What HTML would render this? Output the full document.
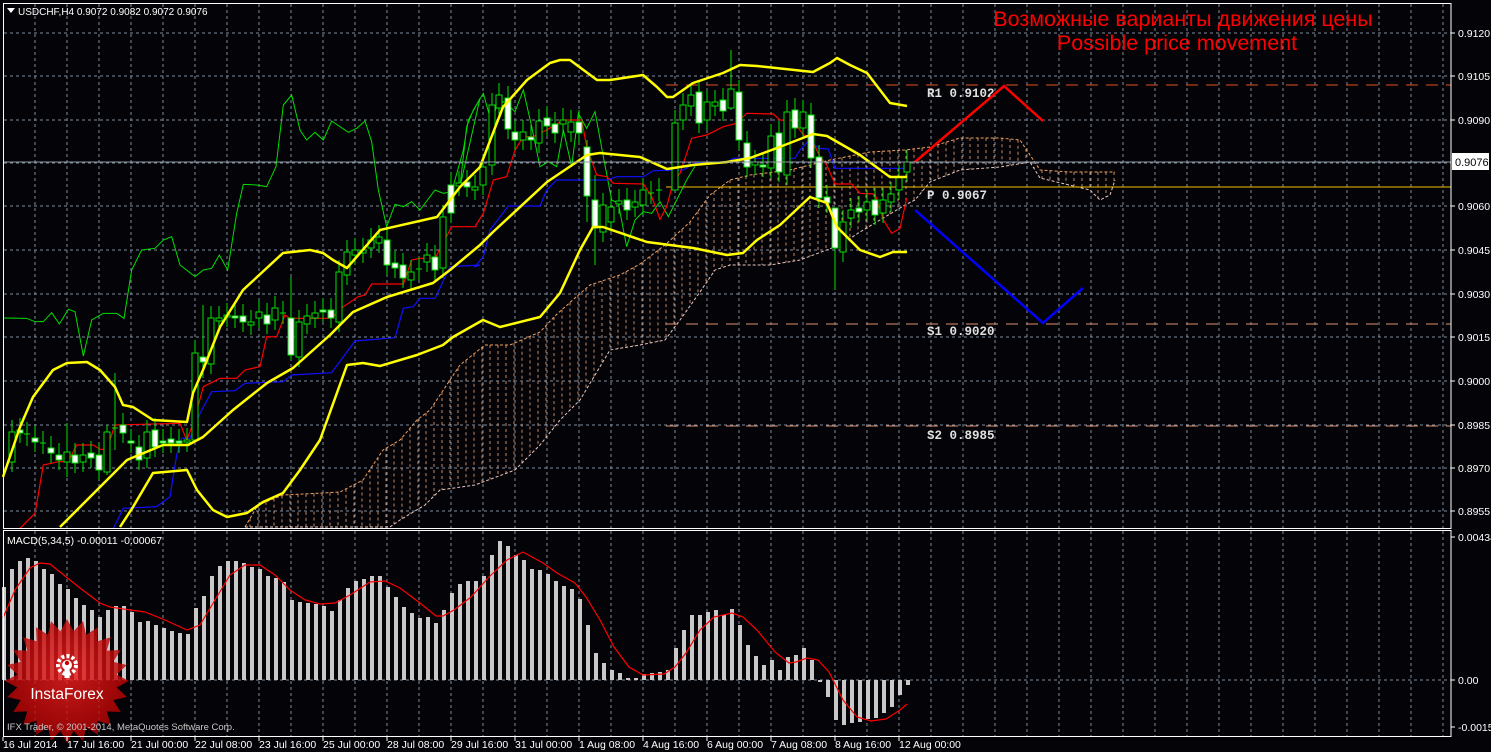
<!DOCTYPE html>
<html><head><meta charset="utf-8"><style>
html,body{margin:0;padding:0;background:#000;width:1491px;height:752px;overflow:hidden}
svg{display:block}
text{font-family:"Liberation Sans",sans-serif}
</style></head><body>
<svg id="s" width="1491" height="752" xmlns="http://www.w3.org/2000/svg"></svg>
<script>
const S=document.getElementById('s');let h='';
const P=a=>a.map(p=>p.join(',')).join(' ');
const pl=(pts,c,w,extra)=>{h+=`<polyline points="${P(pts)}" fill="none" stroke="${c}" stroke-width="${w}" ${extra||''}/>`};
h+=`<rect width="1491" height="752" fill="#040307"/>`;
for(let x=35;x<1451;x+=32){h+=`<line x1="${x}" y1="4" x2="${x}" y2="528" stroke="#7f8c9c" stroke-dasharray="3,3"/>`;h+=`<line x1="${x}" y1="531" x2="${x}" y2="736" stroke="#7f8c9c" stroke-dasharray="3,3"/>`;}
const levels=[[33,'0.9120'],[76,'0.9105'],[120,'0.9090'],[206,'0.9060'],[250,'0.9045'],[294,'0.9030'],[337,'0.9015'],[381,'0.9000'],[425,'0.8985'],[468,'0.8970'],[511,'0.8955']];
for(const [y,t] of levels){h+=`<line x1="4" y1="${y}" x2="1451" y2="${y}" stroke="#7f8c9c" stroke-dasharray="3,3"/>`;h+=`<line x1="1451" y1="${y}" x2="1455" y2="${y}" stroke="#fff"/><text x="1458" y="${y+4}" fill="#fff" font-size="10.5">${t}</text>`;}
h+=`<line x1="4" y1="163" x2="1451" y2="163" stroke="#7f8c9c" stroke-dasharray="3,3"/>`;
const cu=[[245,527],[258,505],[283,495],[323,493],[340,492],[363,480],[383,450],[400,440],[417,420],[430,410],[450,380],[460,365],[485,345],[510,345],[540,332],[556,315],[575,298],[590,285],[620,275],[640,264],[665,245],[690,222],[710,195],[730,180],[750,175],[790,170],[830,160],[870,152],[905,150],[930,147],[960,138],[1000,138],[1020,140],[1030,155],[1040,170],[1070,172],[1115,172]];
const cl=[[245,527],[390,527],[400,520],[425,505],[440,490],[475,485],[515,470],[540,445],[560,420],[580,400],[595,375],[610,350],[640,345],[665,340],[680,320],[700,292],[715,270],[730,265],[770,265],[800,260],[840,245],[860,232],[905,205],[915,200],[930,182],[960,170],[1000,167],[1030,162],[1040,178],[1090,190],[1100,200],[1110,195],[1115,180]];
function interp(a,x){for(let i=0;i<a.length-1;i++){if(x>=a[i][0]&&x<=a[i+1][0]){const t=(x-a[i][0])/(a[i+1][0]-a[i][0]||1);return a[i][1]+t*(a[i+1][1]-a[i][1]);}}return null}
for(let x=250;x<1115;x+=8){const a=interp(cu,x),b=interp(cl,x);if(a!=null&&b!=null&&Math.abs(b-a)>3)h+=`<line x1="${x}" y1="${a}" x2="${x}" y2="${b}" stroke="#e8a070" stroke-dasharray="3,3" stroke-width="1" opacity="0.85"/>`;}
pl(cu,'#f0a060',1,'stroke-dasharray="3,2"');pl(cl,'#e8c8c0',1,'stroke-dasharray="3,2"');
h+=`<line x1="666" y1="85" x2="1451" y2="85" stroke="#e05020" stroke-dasharray="12,8"/>`;
h+=`<line x1="666" y1="187" x2="1451" y2="187" stroke="#f0c000"/>`;
h+=`<line x1="666" y1="324" x2="1451" y2="324" stroke="#e09070" stroke-dasharray="12,8"/>`;
h+=`<line x1="666" y1="426" x2="1451" y2="426" stroke="#e09070" stroke-dasharray="12,8"/>`;
const lab=(x,y,t)=>{h+=`<text x="${x}" y="${y}" fill="#e0e0e0" font-size="12.5" font-weight="bold" style="font-family:'Liberation Mono',monospace">${t}</text>`};
lab(927,97,'R1 0.9102');lab(927,199,'P 0.9067');lab(927,335,'S1 0.9020');lab(927,439,'S2 0.8985');
const g1=[[0,835],[80,835],[105,845],[130,845],[155,818],[178,852],[205,808],[225,815],[250,948],[275,840],[310,820],[350,820],[372,835],[395,690],[425,630],[465,625],[490,600],[515,590],[540,675],[585,710],[610,690],[635,685],[658,645],[683,690],[710,520],[730,433],[770,435],[800,440],[828,380],[850,195],[875,165],[900,270],[920,300],[945,277],[970,300],[995,243],[1045,277],[1070,265],[1095,243],[1115,305],[1135,450],[1160,560],[1185,493],[1210,500],[1235,485],[1260,510],[1305,450],[1330,460],[1355,455],[1390,330],[1405,240],[1440,175]].map(p=>[p[0]/3,40+p[1]/3]);
const g2=[[0,440],[20,260],[40,210],[70,160],[95,250],[115,180],[140,190],[165,215],[190,150],[215,260],[240,380],[265,365],[290,380],[310,270],[335,380],[355,220],[380,265],[405,215],[430,350],[455,480],[475,490],[500,620],[525,540],[550,515],[575,520],[600,485],[625,530],[650,480],[680,420],[710,370]].map(p=>[460+p[0]/3,40+p[1]/3]);
pl([[4,318]].concat(g1.slice(1),g2),'#00e000',1);
const b1=[[340,1465],[370,1405],[470,1400],[510,1370],[530,1245],[545,1195],[570,1195],[600,1120],[635,1055],[705,1052],[735,1030],[850,1025],[875,1005],[995,998],[1065,903],[1185,893],[1210,805],[1240,800],[1260,775],[1305,775],[1350,680],[1440,675]].map(p=>[p[0]/3,40+p[1]/3]);
const b2=[[45,680],[70,650],[90,570],[145,498],[240,498],[260,450],[290,420],[440,420],[470,410],[550,410],[580,392],[670,390],[705,368],[800,368],[820,355],[1005,355],[1020,330],[1050,298],[1075,325],[1105,327],[1125,385],[1340,385]].map(p=>[460+p[0]/3,40+p[1]/3]);
pl(b1.concat(b2),'#1010ff',1.2);
const r1=[[60,1465],[105,1420],[130,1275],[175,1265],[205,1265],[230,1215],[280,1215],[300,1228],[320,1228],[345,1155],[540,1150],[560,1200],[580,1150],[610,1040],[660,1015],[710,1015],[735,990],[780,980],[800,890],[830,890],[855,825],[870,835],[995,835],[1030,800],[1075,770],[1095,765],[1115,732],[1210,732],[1235,660],[1260,655],[1305,655],[1355,560],[1430,560]].map(p=>[p[0]/3,40+p[1]/3]);
const r2=[[0,560],[45,560],[70,520],[100,420],[140,410],[165,330],[190,290],[220,290],[260,270],[310,240],[365,240],[380,320],[410,405],[440,410],[460,430],[550,432],[575,470],[600,538],[620,500],[640,425],[660,400],[695,295],[740,285],[790,260],[830,250],[860,220],[940,222],[960,240],[1000,242],[1030,285],[1050,290],[1080,350],[1100,375],[1125,432],[1175,432],[1200,460],[1245,462],[1270,540],[1295,580],[1320,565],[1340,475]].map(p=>[460+p[0]/3,40+p[1]/3]);
pl(r1.concat(r2),'#ff0000',1.2);
const C=[[12,432,462,'h'],[20,430,433,'w'],[27,434,436,'d'],[35,438,442,'w'],[43,443,444,'d'],[51,448,453,'w'],[59,455,460,'w'],[67,452,462,'h'],[75,455,463,'w'],[83,455,462,'h'],[91,453,458,'w'],[99,455,470,'w'],[107,432,472,'h'],[115,428,429,'d'],[123,425,433,'w'],[131,441,443,'w'],[139,447,460,'w'],[147,432,458,'h'],[155,430,447,'w'],[163,441,443,'w'],[171,439,443,'w'],[179,441,443,'w'],[187,440,442,'h'],[195,353,440,'h'],[203,357,362,'w'],[211,318,364,'h'],[219,318,321,'h'],[227,315,317,'h'],[235,316,318,'w'],[243,316,322,'w'],[251,322,325,'h'],[259,312,318,'h'],[267,315,324,'w'],[275,308,320,'h'],[283,313,314,'d'],[291,318,355,'w'],[299,322,357,'h'],[307,316,324,'h'],[315,313,318,'h'],[323,310,312,'w'],[331,310,318,'w'],[339,272,322,'h'],[347,252,275,'h'],[355,250,255,'h'],[363,250,253,'h'],[371,240,248,'h'],[379,237,243,'h'],[387,240,265,'w'],[395,263,268,'w'],[403,265,278,'w'],[411,272,280,'h'],[419,269,270,'d'],[427,255,262,'h'],[435,257,270,'w'],[443,217,268,'h'],[451,185,213,'w'],[459,183,186,'h'],[467,182,187,'w'],[475,187,190,'h'],
[483,167,185,'h'],[492,105,165,'h'],[499,95,108,'h'],[508,98,129,'w'],[515,132,140,'w'],[523,132,140,'h'],[531,137,140,'w'],[539,121,143,'h'],[547,118,126,'w'],[555,124,133,'w'],[563,120,124,'h'],[571,122,132,'h'],[579,122,133,'w'],[587,147,196,'w'],[595,200,228,'w'],[603,205,232,'h'],[611,207,222,'h'],[619,201,204,'h'],[627,200,210,'w'],[635,202,207,'h'],[643,190,205,'h'],[651,193,194,'d'],[659,190,191,'d'],[675,123,190,'h'],[683,105,120,'h'],[691,95,106,'h'],[699,92,123,'w'],[707,102,120,'h'],[715,102,106,'h'],[723,100,111,'w'],[731,89,108,'h'],[739,92,140,'w'],[747,143,167,'w'],[755,162,165,'h'],[763,165,167,'w'],[771,136,168,'h'],[779,133,172,'w'],[787,112,175,'h'],[795,110,128,'w'],[803,112,128,'h'],[811,115,158,'w'],[819,157,198,'w'],[827,197,203,'w'],[835,208,248,'w'],[843,222,252,'h'],[851,210,218,'h'],[859,208,212,'w'],[867,202,210,'h'],[875,200,215,'w'],[883,200,213,'h'],[891,194,202,'h'],[899,177,190,'h'],[907,162,172,'h']];
const big={195:[340,440],203:[305,378],291:[277,360],587:[140,222],595:[175,265],835:[208,290],739:[80,150],731:[50,110],675:[110,190],115:[373,450],107:[425,475],67:[423,477]};
for(const [x,t,b,k] of C){const w=big[x]||[t-12,b+10];h+=`<line x1="${x}" y1="${w[0]}" x2="${x}" y2="${w[1]}" stroke="#00e000"/>`;
if(k=='d')h+=`<line x1="${x-3}" y1="${t}" x2="${x+3}" y2="${t}" stroke="#00e000"/>`;else h+=`<rect x="${x-3}" y="${t}" width="6" height="${Math.max(2,b-t)}" fill="${k=='w'?'#fff':'#000'}" stroke="#00e000"/>`;}
const yU=[[3,477],[20,427],[33,397],[53,370],[67,363],[87,362],[100,370],[115,387],[123,405],[133,407],[153,420],[187,422],[193,393],[203,370],[220,327],[243,290],[283,253],[310,250],[323,253],[333,260],[347,268],[380,230],[437,217],[460,187],[480,167],[493,133],[503,107],[527,80],[550,63],[560,60],[570,60],[597,80],[610,80],[643,75],[657,87],[667,97],[673,97],[693,83],[723,73],[740,65],[757,66],[813,72],[830,63],[837,58],[850,65],[867,73],[890,103],[907,106]];
const yM=[[60,527],[100,487],[127,460],[163,445],[188,445],[203,437],[233,410],[267,383],[293,368],[330,335],[353,312],[387,297],[433,283],[450,270],[480,245],[493,232],[547,182],[587,155],[600,153],[640,157],[667,169],[693,165],[727,162],[750,158],[777,148],[813,134],[827,136],[860,155],[890,177],[907,177]];
const yL=[[120,527],[133,507],[153,473],[187,470],[197,490],[213,510],[227,517],[247,513],[263,502],[283,493],[300,470],[320,440],[347,365],[363,363],[380,366],[417,355],[443,345],[453,337],[483,320],[500,327],[540,317],[560,293],[580,250],[593,227],[603,227],[647,242],[693,248],[727,255],[743,253],[757,240],[780,225],[810,197],[827,203],[837,227],[860,250],[880,257],[893,252],[907,252]];
[yU,yM,yL].forEach(a=>pl(a,'#ffff00',2.5,'stroke-linejoin="round"'));
pl([[915,162],[1004,86],[1043,121]],'#ff0000',2.5);
pl([[915,210],[1043,323],[1083,288]],'#0000ff',2.5);
h+=`<line x1="4" y1="162" x2="1451" y2="162" stroke="#8c96a0"/>`;
h+=`<rect x="1452" y="153" width="37" height="17" fill="#fff"/><text x="1455" y="166" fill="#000" font-size="11">0.9076</text>`;
h+=`<text x="1183" y="26" fill="#ff0000" font-size="21.5" text-anchor="middle">Возможные варианты движения цены</text>`;
h+=`<text x="1177" y="50" fill="#ff0000" font-size="21.5" text-anchor="middle">Possible price movement</text>`;
h+=`<path d="M7 8 L15 8 L11 13 Z" fill="#fff"/><text x="18" y="15" fill="#fff" font-size="10">USDCHF,H4  0.9072 0.9082 0.9072 0.9076</text>`;
h+=`<line x1="4" y1="680" x2="1451" y2="680" stroke="#7f8c9c" stroke-dasharray="3,3"/>`;
const mb=[587,569,561,558,561,569,574,584,589,598,605,610,617,610,606,606,612,622,621,625,628,631,633,634,608,596,576,566,561,561,563,567,569,576,578,582,600,602,603,604,606,611,600,588,581,579,576,576,587,597,607,613,618,617,623,610,593,584,581,581,576,555,541,546,555,560,569,570,574,581,586,589,599,625,653,663,670,673,678,678,674,673,672,670,648,630,615,615,612,610,615,609,625,645,656,665,660,670,657,655,648,660,682,697,720,725,723,722,719,718,713,707,695,685];
mb.forEach((y,i)=>{const x=2+8*i;const t=Math.min(y,680),bb=Math.max(y,680);if(bb-t>0)h+=`<rect x="${x}" y="${t}" width="4" height="${bb-t}" fill="#c8c8c8"/>`;});
pl([[3,618],[15,590],[30,568],[40,563],[50,564],[60,572],[80,588],[100,603],[110,607],[130,610],[145,612],[165,620],[187,630],[200,625],[215,600],[230,575],[245,565],[260,565],[275,575],[290,590],[305,600],[320,604],[335,603],[350,595],[370,582],[385,581],[400,588],[420,603],[436,616],[443,616],[454,610],[471,597],[489,577],[507,560],[523,552],[543,563],[557,573],[575,583],[586,597],[600,620],[614,647],[629,667],[643,675],[664,674],[675,667],[686,653],[700,630],[714,617],[732,613],[743,617],[757,630],[775,652],[789,663],[796,662],[807,658],[818,660],[829,672],[843,700],[857,717],[871,721],[886,719],[900,710],[907,704]],'#ff0000',1.2);
h+=`<text x="7" y="544" fill="#fff" font-size="10.5">MACD(5,34,5) -0.00011 -0.00067</text>`;
[[537,'0.00434'],[680,'0.00'],[727,'-0.00151']].forEach(([y,t])=>{h+=`<line x1="1451" y1="${y}" x2="1455" y2="${y}" stroke="#fff"/><text x="1458" y="${y+4}" fill="#fff" font-size="10.5">${t}</text>`});
let st='';const cx=67,cy=681;for(let i=0;i<48;i++){const a=i*Math.PI/24,r=i%2?50:62;st+=(cx+r*Math.cos(a)).toFixed(1)+','+(cy+r*Math.sin(a)).toFixed(1)+' ';}
h+=`<defs><radialGradient id="rg" cx="50%" cy="45%" r="55%"><stop offset="0" stop-color="#f02020"/><stop offset="1" stop-color="#b00000"/></radialGradient></defs>`;
h+=`<polygon points="${st}" fill="url(#rg)" opacity="0.82"/>`;
h+=`<circle cx="67" cy="665" r="9" fill="none" stroke="#fff" stroke-width="4" stroke-dasharray="3,2.2"/><circle cx="67" cy="665" r="5" fill="#fff"/><rect x="64.5" y="665" width="5" height="13" fill="#fff"/><circle cx="67" cy="663" r="2.2" fill="#c00"/>`;
h+=`<text x="67" y="699" fill="#fff" font-size="15.5" text-anchor="middle">InstaForex</text>`;
h+=`<text x="7" y="730" fill="#c8c8c8" font-size="9.5">IFX Trader, © 2001-2014, MetaQuotes Software Corp.</text>`;
h+=`<rect x="3.5" y="3.5" width="1447.5" height="525" fill="none" stroke="#fff"/>`;
h+=`<rect x="3.5" y="530.5" width="1447.5" height="206" fill="none" stroke="#fff"/>`;
const tl=['16 Jul 2014','17 Jul 16:00','21 Jul 00:00','22 Jul 08:00','23 Jul 16:00','25 Jul 00:00','28 Jul 08:00','29 Jul 16:00','31 Jul 00:00','1 Aug 08:00','4 Aug 16:00','6 Aug 00:00','7 Aug 08:00','8 Aug 16:00','12 Aug 00:00'];
tl.forEach((t,i)=>{const x=3+64*i;h+=`<line x1="${x}" y1="737" x2="${x}" y2="741" stroke="#fff"/><text x="${x}" y="748" fill="#fff" font-size="10.5">${t}</text>`});
S.innerHTML=h;
</script>
</body></html>
